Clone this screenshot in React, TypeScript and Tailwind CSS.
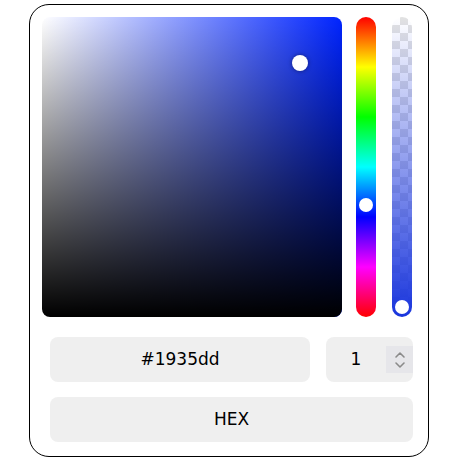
import React from "react";

function Chevrons() {
  return (
    <svg width="14" height="22" viewBox="0 0 14 22" fill="none" stroke="#8a8a8a" strokeWidth="1.6" strokeLinecap="round" strokeLinejoin="round">
      <path d="M3 8 L7 4 L11 8" />
      <path d="M3 14 L7 18 L11 14" />
    </svg>
  );
}

export default function App() {
  return (
    <div className="w-[460px] h-[460px] bg-white pt-[4px] pl-[29px]" style={{ fontFamily: '"DejaVu Sans", sans-serif' }}>
      <div className="w-[400px] h-[453px] border border-black rounded-[20px] pt-[12px] pl-[12px]">
        <div className="flex">
          <div className="relative w-[300px] h-[300px] rounded-[8px] overflow-hidden bg-[linear-gradient(to_right,#ffffff,#0024ff)]">
            <div className="absolute inset-0 bg-[linear-gradient(to_bottom,rgba(0,0,0,0),#000000)]" />
            <div className="absolute left-[250px] top-[38px] w-[16px] h-[16px] rounded-full bg-white shadow-[0_0_4px_rgba(0,0,0,0.45)]" />
          </div>
          <div className="relative ml-[14px] w-[20px] h-[300px] rounded-full bg-[linear-gradient(to_bottom,#ff0000,#ffff00,#00ff00,#00ffff,#0000ff,#ff00ff,#ff0000)]">
            <div className="absolute left-[3px] top-[181px] w-[14px] h-[14px] rounded-full bg-white" />
          </div>
          <div className="relative ml-[16px] w-[20px] h-[300px] rounded-full overflow-hidden bg-white bg-[repeating-conic-gradient(#e2e2e2_0%_25%,#ffffff_0%_50%)] bg-[length:16px_16px]">
            <div className="absolute inset-0 bg-[linear-gradient(to_bottom,rgba(25,53,221,0),#1935dd)]" />
            <div className="absolute left-[3px] top-[283px] w-[14px] h-[14px] rounded-full bg-white" />
          </div>
        </div>
        <div className="ml-[8px] mt-[20px] w-[363px]">
          <div className="flex gap-[16px]">
            <div className="w-[260px] h-[45px] rounded-[8px] bg-[#efefef] flex items-center justify-center text-[17px] text-black">
              #1935dd
            </div>
            <div className="w-[87px] h-[45px] rounded-[8px] bg-[#efefef] flex items-center">
              <div className="flex-1 text-center text-[17px] text-black">1</div>
              <div className="w-[27px] h-[27px] bg-[#e6e6ea] flex items-center justify-center">
                <Chevrons />
              </div>
            </div>
          </div>
          <div className="mt-[15px] w-[363px] h-[45px] rounded-[8px] bg-[#efefef] flex items-center justify-center text-[17px] text-black">
            HEX
          </div>
        </div>
      </div>
    </div>
  );
}
